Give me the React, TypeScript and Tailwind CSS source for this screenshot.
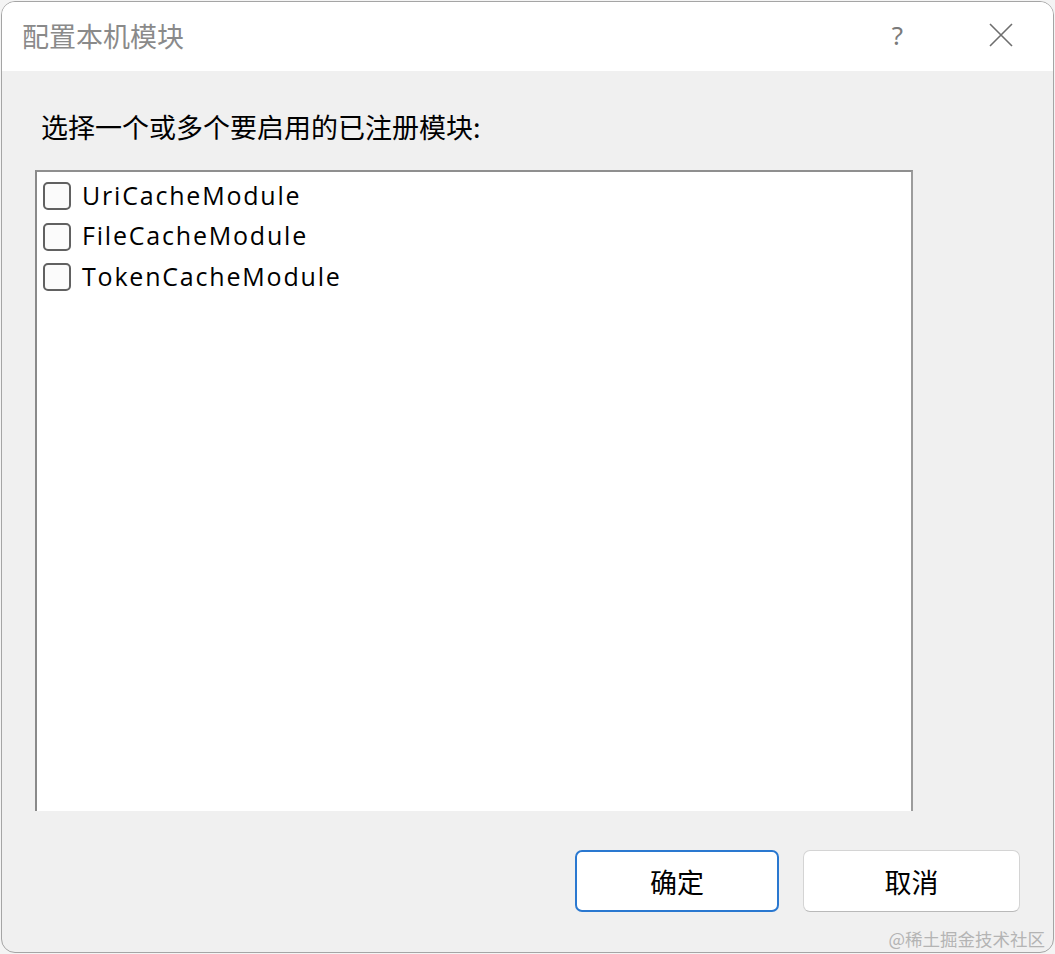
import React from "react";

const cjk = '"Noto Sans CJK SC", "Noto Sans", sans-serif';
const latin = '"Open Sans", "Noto Sans CJK SC", sans-serif';

function Item({ label }: { label: string }) {
  return (
    <div className="flex items-center h-[40.5px] pl-[6px]">
      <div className="w-[28px] h-[28px] rounded-[5px] border-2 border-[#616161] bg-[#fbfbfb] shrink-0" />
      <span className="ml-[11px] text-[25px] tracking-[1.8px] text-black leading-none -mt-[2px]" style={{ fontFamily: latin }}>
        {label}
      </span>
    </div>
  );
}

export default function App() {
  return (
    <div className="w-[1055px] h-[954px] bg-[#f4f4f4] relative overflow-hidden">
      <div className="absolute left-[1px] top-[1px] w-[1053px] h-[952px] rounded-[14px] border border-[#a5a5a5] overflow-hidden flex flex-col bg-[#f0f0f0]">
        <div className="h-[69px] bg-white flex items-center shrink-0" style={{ fontFamily: cjk }}>
          <span className="ml-[20px] text-[27px] text-[#8a8a8a] leading-none -mt-[2px]">配置本机模块</span>
          <span className="ml-auto text-[26px] text-[#7a7a7a] leading-none mr-[86px] -mt-[4px]" style={{ fontFamily: '"Noto Sans", sans-serif' }}>?</span>
          <svg width="24" height="24" viewBox="0 0 24 24" className="mr-[40px] -mt-[3px]">
            <path d="M1 1 L23 23 M23 1 L1 23" stroke="#6e6e6e" strokeWidth="1.6" fill="none" />
          </svg>
        </div>
        <div className="flex-1 flex flex-col relative">
          <div className="mt-[42px] ml-[39px] text-[27px] text-black leading-none" style={{ fontFamily: cjk }}>
            选择一个或多个要启用的已注册模块:
          </div>
          <div className="mt-[30px] ml-[33px] w-[878px] h-[641px] bg-white border-l-2 border-t-2 border-r-2 border-l-[#8a8a8a] border-t-[#8f8f8f] border-r-[#9c9c9c] pt-[4px]">
            <Item label="UriCacheModule" />
            <Item label="FileCacheModule" />
            <Item label="TokenCacheModule" />
          </div>
          <div className="mt-[39px] flex" style={{ fontFamily: cjk }}>
            <button className="ml-[573px] w-[204px] h-[62px] rounded-[7px] bg-white border-2 border-[#2a78d0] text-[27px] text-black leading-none flex items-center justify-center">
              确定
            </button>
            <button className="ml-[24px] w-[217px] h-[62px] rounded-[7px] bg-white border border-[#d4d4d4] border-b-[#b9b9b9] text-[27px] text-black leading-none flex items-center justify-center">
              取消
            </button>
          </div>
          <div className="absolute right-[8px] bottom-[5px] text-[17.5px] text-[#b4b4b4] leading-none" style={{ fontFamily: cjk }}>
            @稀土掘金技术社区
          </div>
        </div>
      </div>
    </div>
  );
}
